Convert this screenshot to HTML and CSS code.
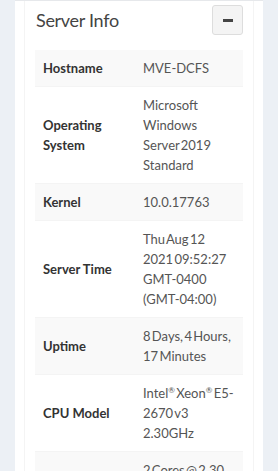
FILE: index.html
```html
<!DOCTYPE html>
<html lang="en">
<head>
    <meta charset="UTF-8">
    <meta name="viewport" content="width=device-width, initial-scale=1.0">
    <title>Server Info</title>
    <link rel="stylesheet" href="styles.css">
</head>
<body>

    <div class="card">
        <div class="box">
            <div class="box-header">
                <h3 class="box-title">Server Info</h3>
                <button type="button" class="btn-collapse" title="Collapse">
                    <span class="minus"></span>
                </button>
            </div>

            <table class="info-table">
                <tr>
                    <th>Hostname</th>
                    <td>MVE-DCFS</td>
                </tr>
                <tr>
                    <th>Operating System</th>
                    <td>Microsoft Windows Server 2019 Standard</td>
                </tr>
                <tr>
                    <th>Kernel</th>
                    <td>10.0.17763</td>
                </tr>
                <tr>
                    <th>Server Time</th>
                    <td>Thu Aug 12 2021 09:52:27 GMT-0400 (GMT-04:00)</td>
                </tr>
                <tr>
                    <th>Uptime</th>
                    <td>8 Days, 4 Hours, 17 Minutes</td>
                </tr>
                <tr>
                    <th>CPU Model</th>
                    <td>Intel<sup>®</sup> Xeon<sup>®</sup> E5-2670 v3 2.30GHz</td>
                </tr>
                <tr>
                    <th>CPU Cores</th>
                    <td>2 Cores @ 2.30 GHz</td>
                </tr>
            </table>
        </div>
    </div>

</body>
</html>
```

FILE: styles.css
```css
body {
    margin: 0;
    padding: 0 15px;
    background-color: #ecf0f5;
    font-family: Lato, "Open Sans", sans-serif;
    font-size: 13px;
    color: #555;
}
.card {
    background-color: #fff;
    border-top: 1px solid #e6e8eb;
    padding: 0 9px;
}
.box {
    border: 1px solid #f4f4f4;
    border-top: none;
    padding: 4px 10px 0;
}
.box-header {
    display: flex;
    align-items: center;
    justify-content: space-between;
    height: 30px;
    margin-bottom: 15px;
}
.box-title {
    margin: 0;
    padding-left: 1px;
    font-size: 18px;
    letter-spacing: -0.3px;
    font-weight: normal;
    color: #444;
}
.btn-collapse {
    width: 31px;
    height: 30px;
    padding: 0;
    background-color: #f4f4f4;
    border: 1px solid #ddd;
    border-radius: 3px;
    display: flex;
    align-items: center;
    justify-content: center;
    cursor: pointer;
}
.minus {
    display: block;
    width: 10px;
    height: 3px;
    background-color: #444;
}
.info-table {
    width: 100%;
    border-collapse: collapse;
    line-height: 20px;
}
.info-table th,
.info-table td {
    padding: 8px;
    border-top: 1px solid #f4f4f4;
    vertical-align: middle;
    text-align: left;
}
.info-table td {
    padding-right: 8.5px;
    word-spacing: -2px; /* tighter spaces, closer to the original font */
}
.info-table tr:first-child th,
.info-table tr:first-child td {
    border-top: none;
}
.info-table th {
    width: 84px;
    font-weight: bold;
    color: #333;
}
.info-table tr:nth-child(odd) {
    background-color: #f9f9f9;
}
.info-table sup {
    font-size: 8px;
    line-height: 0;
}
```
